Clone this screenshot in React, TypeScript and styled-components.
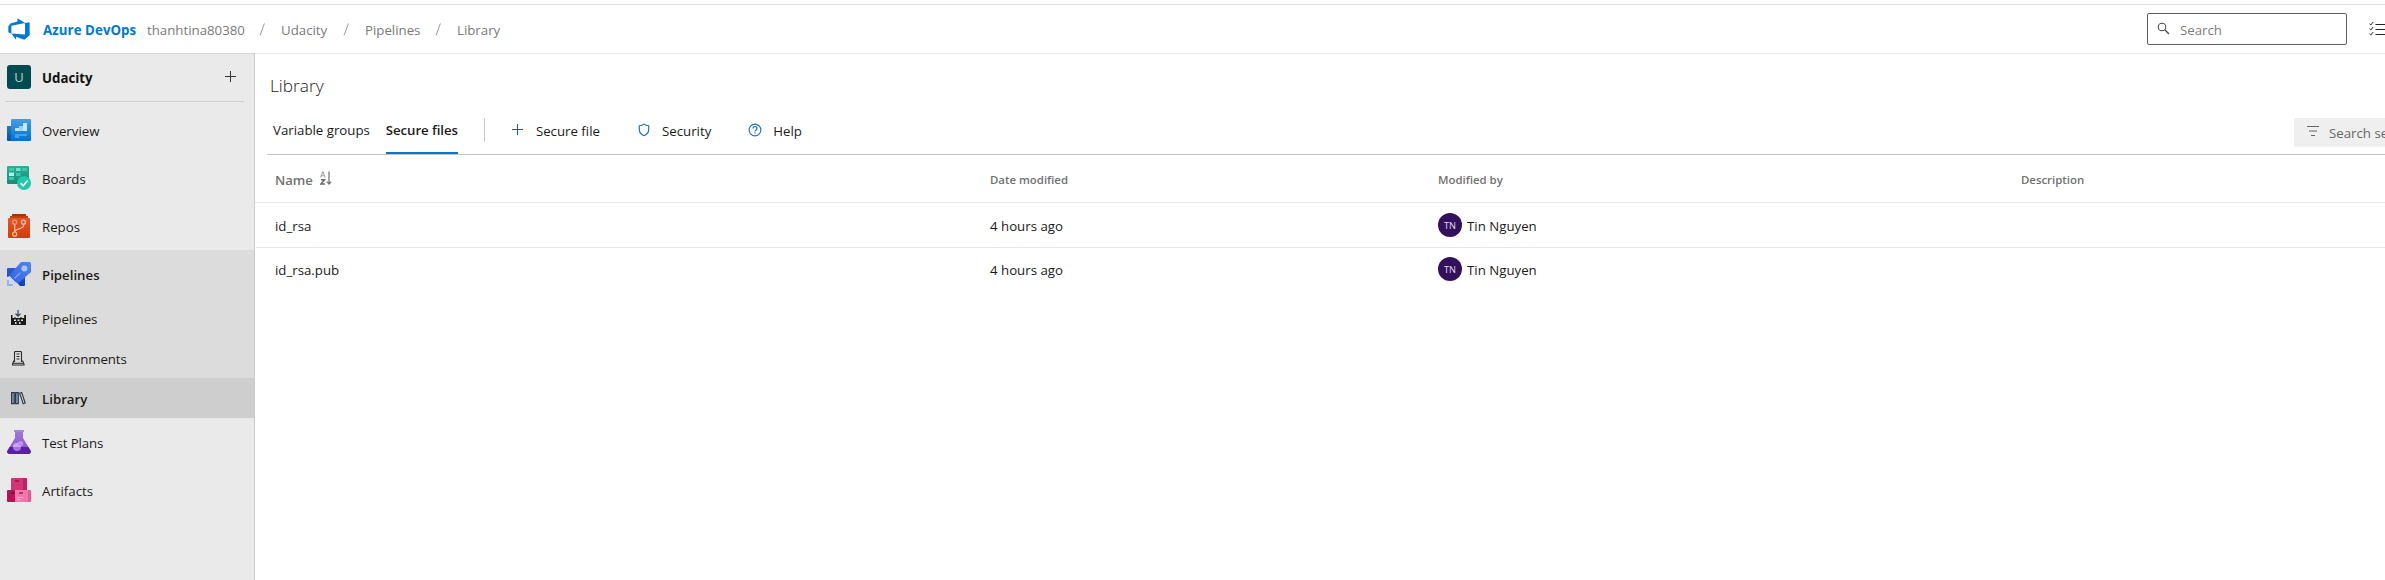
import React from 'react';
import styled, { createGlobalStyle } from 'styled-components';

const Global = createGlobalStyle`
  *, *::before, *::after { box-sizing: border-box; }
  html, body, #root { height: 100%; }
  body {
    margin: 0;
    overflow: hidden;
    background: #fff;
    color: #1b1a19;
    font-family: "Open Sans", "Noto Sans", sans-serif;
    font-size: 13.25px;
  }
`;

const Page = styled.div`
  display: flex;
  flex-direction: column;
  width: 2385px;
  height: 580px;
  padding-top: 4px;
  overflow: hidden;
`;

const Label = styled.span<{ $weight?: number; $spacing?: number }>`
  display: block;
  padding-top: 2px;
  line-height: 18px;
  white-space: nowrap;
  font-weight: ${(p) => p.$weight ?? 400};
  letter-spacing: ${(p) => p.$spacing ?? 0}px;
`;

/* Top bar */
const TopBar = styled.header`
  display: flex;
  align-items: center;
  flex: none;
  height: 50px;
  padding-left: 7px;
  border-top: 1px solid #dedede;
  border-bottom: 1px solid #eaeaea;
`;
const Brand = styled.div`
  display: flex;
  align-items: center;
  gap: 12px;
  width: 140px;
  color: #0078d4;
`;
const Crumb = styled.div<{ $width: number }>`
  width: ${(p) => p.$width}px;
  color: #7a7a7a;
`;
const Slash = styled.div`
  width: 22px;
  svg { display: block; }
`;
const SearchBox = styled.div`
  display: flex;
  align-items: center;
  width: 200px;
  height: 32px;
  margin-left: auto;
  padding-left: 9px;
  gap: 10px;
  border: 1px solid #605e5c;
  border-radius: 2px;
  color: #7d7d7d;
`;
const TaskButton = styled.div`
  width: 38px;
  padding-left: 22px;
  overflow: hidden;
  svg { display: block; }
`;

/* Sidebar */
const Body = styled.div`
  display: flex;
  flex: 1;
  min-height: 0;
`;
const Sidebar = styled.nav`
  display: flex;
  flex-direction: column;
  flex: none;
  width: 255px;
  margin-top: -1px;
  border-top: 1px solid #d8d8d8;
  border-right: 1px solid #cccccc;
  background: #eaeaea;
`;
const Project = styled.div`
  display: flex;
  align-items: center;
  height: 48px;
  margin: 0 10px 0 5px;
  padding: 0 7px 1px 2px;
  border-bottom: 1px solid #cfcfcf;
  color: #111;
`;
const ProjectBadge = styled.div`
  width: 24px;
  height: 24px;
  margin-right: 11px;
  border-radius: 3px;
  background: #004b50;
  color: #b9d0d1;
  font-size: 13px;
  line-height: 24px;
  text-align: center;
`;
const AddButton = styled.div`
  margin-left: auto;
  svg { display: block; }
`;
const Hub = styled.div<{ $active?: boolean }>`
  display: flex;
  align-items: center;
  gap: 11px;
  height: 48px;
  padding-left: 7px;
  background: ${(p) => (p.$active ? '#dcdcdc' : 'transparent')};
  svg { flex: none; }
`;
const SubHub = styled.div<{ $selected?: boolean }>`
  display: flex;
  align-items: center;
  gap: 16px;
  height: 40px;
  padding-left: 11px;
  background: ${(p) => (p.$selected ? '#cecece' : '#dcdcdc')};
  svg { flex: none; }
`;
const HubList = styled.div`
  padding-top: 4px;
`;

/* Main area */
const Main = styled.main`
  display: flex;
  flex-direction: column;
  flex: 1;
  min-width: 0;
  padding-top: 19px;
`;
const Title = styled.h1`
  margin: 0;
  padding: 0 0 1px 15px;
  font-size: 17.3px;
  font-weight: 300;
  line-height: 25px;
`;
const Toolbar = styled.div`
  display: flex;
  align-items: center;
  height: 56px;
  margin-left: 12px;
  padding: 6px 0 0 6px;
  border-bottom: 1px solid #c3c3c3;
`;
const Tab = styled.div<{ $selected?: boolean }>`
  height: 100%;
  margin-right: 16px;
  padding-top: 14px;
  border-bottom: 2px solid ${(p) => (p.$selected ? '#0078d4' : 'transparent')};
`;
const Separator = styled.div`
  width: 1px;
  height: 24px;
  margin: 0 27px 0 10px;
  background: #c8c8c8;
`;
const Command = styled.div<{ $gap: number; $after?: number }>`
  display: flex;
  align-items: center;
  gap: ${(p) => p.$gap}px;
  margin-right: ${(p) => p.$after ?? 0}px;
`;
const Filter = styled.div`
  display: flex;
  align-items: center;
  gap: 10px;
  width: 91px;
  height: 29px;
  margin: 5px 0 0 auto;
  padding-left: 13px;
  overflow: hidden;
  border-radius: 2px 0 0 2px;
  background: #efefef;
  color: #666;
  svg { flex: none; }
`;

/* Table */
const grid = `
  display: grid;
  grid-template-columns: 715px 448px 583px 1fr;
  align-items: center;
  padding-left: 20px;
`;
const HeadRow = styled.div`
  ${grid}
  height: 48px;
  border-bottom: 1px solid #e8e8e8;
  color: #717171;
  font-size: 11.4px;
`;
const SortableHead = styled.div`
  display: flex;
  align-items: center;
  gap: 7px;
  font-size: 13.1px;
`;
const Row = styled.div`
  ${grid}
  height: 44px;
  margin-left: 1px;
  padding-left: 19px;
  & + & { box-shadow: inset 0 1px #e8e8e8; }
`;
const Person = styled.div`
  display: flex;
  align-items: center;
  gap: 5px;
`;
const Avatar = styled.div`
  width: 24px;
  height: 24px;
  border-radius: 50%;
  background: #32105c;
  color: #e3dcea;
  font-size: 9.2px;
  line-height: 25px;
  text-align: center;
`;

const Logo = () => (
  <svg width="24" height="24" viewBox="0 0 18 18">
    <path fill="#0078d4" d="M17 4v9.74l-4 3.28-6.2-2.26V17l-3.51-4.59 10.23.8V4.44zm-3.41.49L7.85 1v2.29L2.58 4.84 1 6.87v4.61l2.26 1V6.57z" />
  </svg>
);
const Plus = ({ color }: { color: string }) => (
  <svg width="12" height="12" viewBox="0 0 12 12">
    <path d="M5.5 0v11M0 5.5h11" fill="none" stroke={color} />
  </svg>
);
const Magnifier = () => (
  <svg width="13" height="15" viewBox="0 0 13 15" fill="none" stroke="#4a4a4a">
    <circle cx="5" cy="5" r="3.8" strokeWidth="1.1" />
    <path d="M7.8 7.8 12 12" strokeWidth="1.4" />
  </svg>
);
const Tasks = () => (
  <svg width="20" height="16" viewBox="0 0 20 16" fill="none" stroke="#222">
    <path d="M6.5 3.5H20M6.5 8.5H20M6.5 13.5H20" />
    <path d="m.5 2.8 1.3 1.2L4.2 1M.5 7.8l1.3 1.2L4.2 6M.5 12.8l1.3 1.2L4.2 11" />
  </svg>
);
const SlashMark = () => (
  <svg width="7" height="13" viewBox="0 0 7 13">
    <path d="M5.4.5 1 12.5" stroke="#9c9c9c" fill="none" />
  </svg>
);
const FilterLines = () => (
  <svg width="12" height="12" viewBox="0 0 12 12">
    <path d="M0 .5h12M2 5h8M4 9.5h4" stroke="#666" fill="none" />
  </svg>
);
const Shield = () => (
  <svg width="12" height="14" viewBox="0 0 12 14">
    <path d="M6 1.1C4.5 2.3 2.8 2.7 1.3 2.7V6.5c0 3 1.8 4.9 4.7 6.2 2.9-1.3 4.700-3.200 4.700-6.200V2.700C9.200 2.700 7.500 2.300 6 1.100z" fill="none" stroke="#1a6fb5" strokeWidth="1.15" />
  </svg>
);
const HelpCircle = () => (
  <svg width="14" height="14" viewBox="0 0 14 14" fill="none" stroke="#1a6fb5">
    <circle cx="7" cy="7" r="5.9" strokeWidth="1.1" />
    <path d="M5 5.500a2 1.900 0 1 1 3.100 1.500c-.7.5-1.100.8-1.100 1.600M7 9.600v1.200" strokeWidth="1.2" />
  </svg>
);
const SortAz = () => (
  <svg width="12" height="15" viewBox="0 0 12 15" fill="none">
    <path d="m.6 6.500 2-5.500h.5l2 5.500M1.300 4.700h3.100" stroke="#a5a5a5" strokeWidth="1.1" />
    <path d="M1 8.700h3.600L1 13h3.900" stroke="#666" strokeWidth="1.4" />
    <path d="M9 .5v12.500M6.800 10.600 9 13l2.200-2.400" stroke="#707070" strokeWidth="1.2" />
  </svg>
);

const OverviewIcon = () => (
  <svg width="24" height="24" viewBox="0 0 24 24">
    <defs>
      <linearGradient id="ov" x1="0" y1="0" x2="0" y2="1"><stop offset="0" stopColor="#459ee6" /><stop offset="1" stopColor="#0072d2" /></linearGradient>
      <linearGradient id="ovb" x1="0" y1="0" x2="0" y2="1"><stop offset="0" stopColor="#2a78bd" /><stop offset="1" stopColor="#07549c" /></linearGradient>
    </defs>
    <path d="M0 8h6v15H1a1 1 0 0 1-1-1z" fill="url(#ovb)" />
    <path d="M4 2a1 1 0 0 1 1-1h18a1 1 0 0 1 1 1v20a1 1 0 0 1-1 1H3q1-.5 1-2z" fill="url(#ov)" />
    <path d="M8 10h4v3H8z" fill="#c4e4fb" />
    <path d="M12 8h4v5h-4z" fill="#9fd2f8" />
    <path d="M16 5h4v8h-4z" fill="#c9e9ff" />
    <path d="M8 16h12v2H8zM8 18h4v2H8z" fill="#4a9fe8" />
  </svg>
);
const BoardsIcon = () => (
  <svg width="24" height="24" viewBox="0 0 24 24">
    <defs><linearGradient id="bd" x1="0" y1="0" x2="0" y2="1"><stop offset="0" stopColor="#2fae93" /><stop offset="1" stopColor="#1c8a77" /></linearGradient></defs>
    <rect width="22" height="18" rx="1" fill="url(#bd)" />
    <path d="M2 2h5v3H2zM15 2h5v3h-5zM9 7h4.500v3H9zM2 11h5v3H2z" fill="#38c9a9" />
    <path d="M9 2h4.500v3H9z" fill="#6ee6cd" />
    <path d="M2 6.500h5V10H2z" fill="#a6f7e6" />
    <circle cx="17" cy="17" r="7" fill="#1fc8aa" />
    <path d="m13.500 17.200 2.700 2.500 4.500-5.200" fill="none" stroke="#fff" strokeWidth="1.7" />
  </svg>
);
const ReposIcon = () => (
  <svg width="24" height="24" viewBox="0 0 24 24">
    <defs><linearGradient id="rp" x1="0" y1="0" x2="0" y2="1"><stop offset="0" stopColor="#dd5730" /><stop offset="1" stopColor="#d83b01" /></linearGradient></defs>
    <path d="M5.500 0h13a.5.500 0 0 1 .5.500V2h2v3H3V2h2V.500a.5.500 0 0 1 .5-.5z" fill="#a93205" />
    <path d="M3 2.200h18V4H3z" fill="#c2410c" />
    <rect x="1" y="4" width="22" height="20" rx="1" fill="url(#rp)" />
    <g fill="none" stroke="#ffbda6" strokeWidth="1.3">
      <circle cx="7.7" cy="8.2" r="2" stroke="#f59274" />
      <circle cx="16.5" cy="8.2" r="2" />
      <circle cx="7.7" cy="20.2" r="2" />
      <path d="M7.700 10.200v8M16.500 10.200v1.600c0 1-.5 1.500-1.500 1.900l-5.800 2.300c-1 .4-1.500 1-1.500 2.200" />
    </g>
  </svg>
);
const PipelinesIcon = () => (
  <svg width="24" height="24" viewBox="0 0 24 24">
    <defs>
      <linearGradient id="pl" x1="1" y1="0" x2="0" y2="1"><stop offset="0" stopColor="#5287ef" /><stop offset="1" stopColor="#3063dc" /></linearGradient>
      <linearGradient id="plb" x1="0" y1="0" x2="0" y2="1"><stop offset="0" stopColor="#2c5cc8" /><stop offset="1" stopColor="#0f3fbd" /></linearGradient>
    </defs>
    <path d="M1 6h10l7 7v10a1 1 0 0 1-1 1h-4L9.500 20 3 14 0 15V7a1 1 0 0 1 1-1z" fill="url(#plb)" />
    <path d="M14 0h8.500A1.500 1.500 0 0 1 24 1.500V10L11.500 21 9 20.500 3.500 15 3 12.500z" fill="url(#pl)" />
    <circle cx="17.4" cy="6.4" r="3" fill="#a9c5fd" />
    <path d="m7.500 16.500 5.700-5.700" stroke="#7aa5f8" strokeWidth="1.3" />
    <path d="M0 18h2v4h4v2H0z" fill="#8db2f6" />
    <path d="m2 14 8 8H8l-2-2-2.500 1L3 20l1-2-2-2z" fill="#c2d5fb" />
  </svg>
);
const BuildIcon = () => (
  <svg width="15" height="16" viewBox="0 0 15 16">
    <path d="M7 0v6M4.500 3.700 7 6.200l2.500-2.500" fill="none" stroke="#333f50" strokeWidth="1.2" />
    <path fill="#1b1b1b" fillRule="evenodd" d="M0 5h1.500v3h2V7h1v1h4.800V7h1.200v1h2.700V5H15v10H0zM3 9.500h2V11H3zm3.500 0h2V11h-2zm3.500 0h2V11h-2zM4 12v2h1.500v-2zm4 0v2h1.500v-2z" />
  </svg>
);
const EnvironmentsIcon = () => (
  <svg width="15" height="15" viewBox="0 0 15 15" fill="none" stroke="#2a2a2a">
    <path d="M3.500 11V1.500q0-1 1-1h5q1 0 1 1V11M5.500 3h3M5.500 5.500h3M5.500 8h3M3 9.500l-1.500 3.500v1h11.500v-1l-1.500-3.500M2 12.300h11" strokeWidth="1.1" />
  </svg>
);
const LibraryIcon = () => (
  <svg width="15" height="15" viewBox="0 0 15 15" fill="none" stroke="#263747">
    <path d="M.6 1.600h2.700v11H.6zM4.600 1.600h2.700v11H4.600z" strokeWidth="1.1" fill="#8298ab" />
    <path d="m8.700 2.300 2-.8 3.500 10.500-2 .8z" strokeWidth="1.1" />
  </svg>
);
const TestPlansIcon = () => (
  <svg width="24" height="24" viewBox="0 0 24 24">
    <defs><linearGradient id="tp" x1="0" y1="0" x2="0" y2="1"><stop offset="0" stopColor="#a077d6" /><stop offset="1" stopColor="#8a4dcc" /></linearGradient></defs>
    <path d="M8 2h8v6l7.500 12.500c.9 2-.2 3.500-2 3.500h-19c-1.800 0-2.900-1.500-2-3.500L8 8z" fill="url(#tp)" />
    <path d="M2.700 17h18.600l2.200 3.500c.9 2-.2 3.500-2 3.500h-19c-1.800 0-2.900-1.500-2-3.500z" fill="#5c1fa8" />
    <rect x="7" width="10" height="2" rx=".5" fill="#a682da" />
    <circle cx="10" cy="17" r="4" fill="#a573e6" />
    <path d="M6 17a4 4 0 0 1 8 0z" fill="#cba6f6" />
    <circle cx="13.6" cy="13.5" r="2.6" fill="#bd93ec" />
  </svg>
);
const ArtifactsIcon = () => (
  <svg width="24" height="24" viewBox="0 0 24 24">
    <path d="M5 0h11v12H4V1a1 1 0 0 1 1-1z" fill="#cf3673" />
    <path d="M16 0h3a1 1 0 0 1 1 1v11h-4z" fill="#bb2560" />
    <path d="M8 2h4v2H8z" fill="#a31b50" />
    <path d="M1 12h7v12H1a1 1 0 0 1-1-1V13a1 1 0 0 1 1-1z" fill="#b01657" />
    <path d="M4 14h3.500v2H4z" fill="#82103f" />
    <path d="M8 12h13v12H8z" fill="#f077a9" />
    <path d="M21 12h2a1 1 0 0 1 1 1v10a1 1 0 0 1-1 1h-2z" fill="#e55a94" />
    <path d="M12 14h4v2h-4z" fill="#c52e6c" />
    <path d="M10 19h6v1h-6zM10 21h3.500v1H10z" fill="#fbb3d0" />
  </svg>
);

const files = [
  { name: 'id_rsa', modified: '4 hours ago', by: 'Tin Nguyen', initials: 'TN' },
  { name: 'id_rsa.pub', modified: '4 hours ago', by: 'Tin Nguyen', initials: 'TN' },
];

export default function App() {
  return (
    <Page>
      <Global />
      <TopBar>
        <Brand>
          <Logo />
          <Label $weight={700} $spacing={0.08}>Azure DevOps</Label>
        </Brand>
        <Crumb $width={112}><Label>thanhtina80380</Label></Crumb>
        <Slash><SlashMark /></Slash>
        <Crumb $width={62}><Label>Udacity</Label></Crumb>
        <Slash><SlashMark /></Slash>
        <Crumb $width={70}><Label>Pipelines</Label></Crumb>
        <Slash><SlashMark /></Slash>
        <Crumb $width={60}><Label>Library</Label></Crumb>
        <SearchBox>
          <Magnifier />
          <Label>Search</Label>
        </SearchBox>
        <TaskButton><Tasks /></TaskButton>
      </TopBar>
      <Body>
        <Sidebar>
          <Project>
            <ProjectBadge>U</ProjectBadge>
            <Label $weight={700}>Udacity</Label>
            <AddButton><Plus color="#333" /></AddButton>
          </Project>
          <HubList>
            <Hub><OverviewIcon /><Label>Overview</Label></Hub>
            <Hub><BoardsIcon /><Label>Boards</Label></Hub>
            <Hub><ReposIcon /><Label>Repos</Label></Hub>
            <Hub $active><PipelinesIcon /><Label $weight={600}>Pipelines</Label></Hub>
            <SubHub><BuildIcon /><Label>Pipelines</Label></SubHub>
            <SubHub><EnvironmentsIcon /><Label $spacing={-0.1}>Environments</Label></SubHub>
            <SubHub $selected><LibraryIcon /><Label $weight={600}>Library</Label></SubHub>
            <Hub><TestPlansIcon /><Label $spacing={-0.1}>Test Plans</Label></Hub>
            <Hub><ArtifactsIcon /><Label>Artifacts</Label></Hub>
          </HubList>
        </Sidebar>
        <Main>
          <Title>Library</Title>
          <Toolbar>
            <Tab><Label>Variable groups</Label></Tab>
            <Tab $selected><Label $weight={600} $spacing={-0.08}>Secure files</Label></Tab>
            <Separator />
            <Command $gap={12} $after={38}><Plus color="#1a5fa5" /><Label>Secure file</Label></Command>
            <Command $gap={12} $after={37}><Shield /><Label>Security</Label></Command>
            <Command $gap={11}><HelpCircle /><Label>Help</Label></Command>
            <Filter><FilterLines /><Label>Search se</Label></Filter>
          </Toolbar>
          <HeadRow>
            <SortableHead><Label $weight={600}>Name</Label><SortAz /></SortableHead>
            <Label $weight={600}>Date modified</Label>
            <Label $weight={600}>Modified by</Label>
            <Label $weight={600}>Description</Label>
          </HeadRow>
          {files.map((f) => (
            <Row key={f.name}>
              <Label>{f.name}</Label>
              <Label>{f.modified}</Label>
              <Person>
                <Avatar>{f.initials}</Avatar>
                <Label>{f.by}</Label>
              </Person>
            </Row>
          ))}
        </Main>
      </Body>
    </Page>
  );
}
